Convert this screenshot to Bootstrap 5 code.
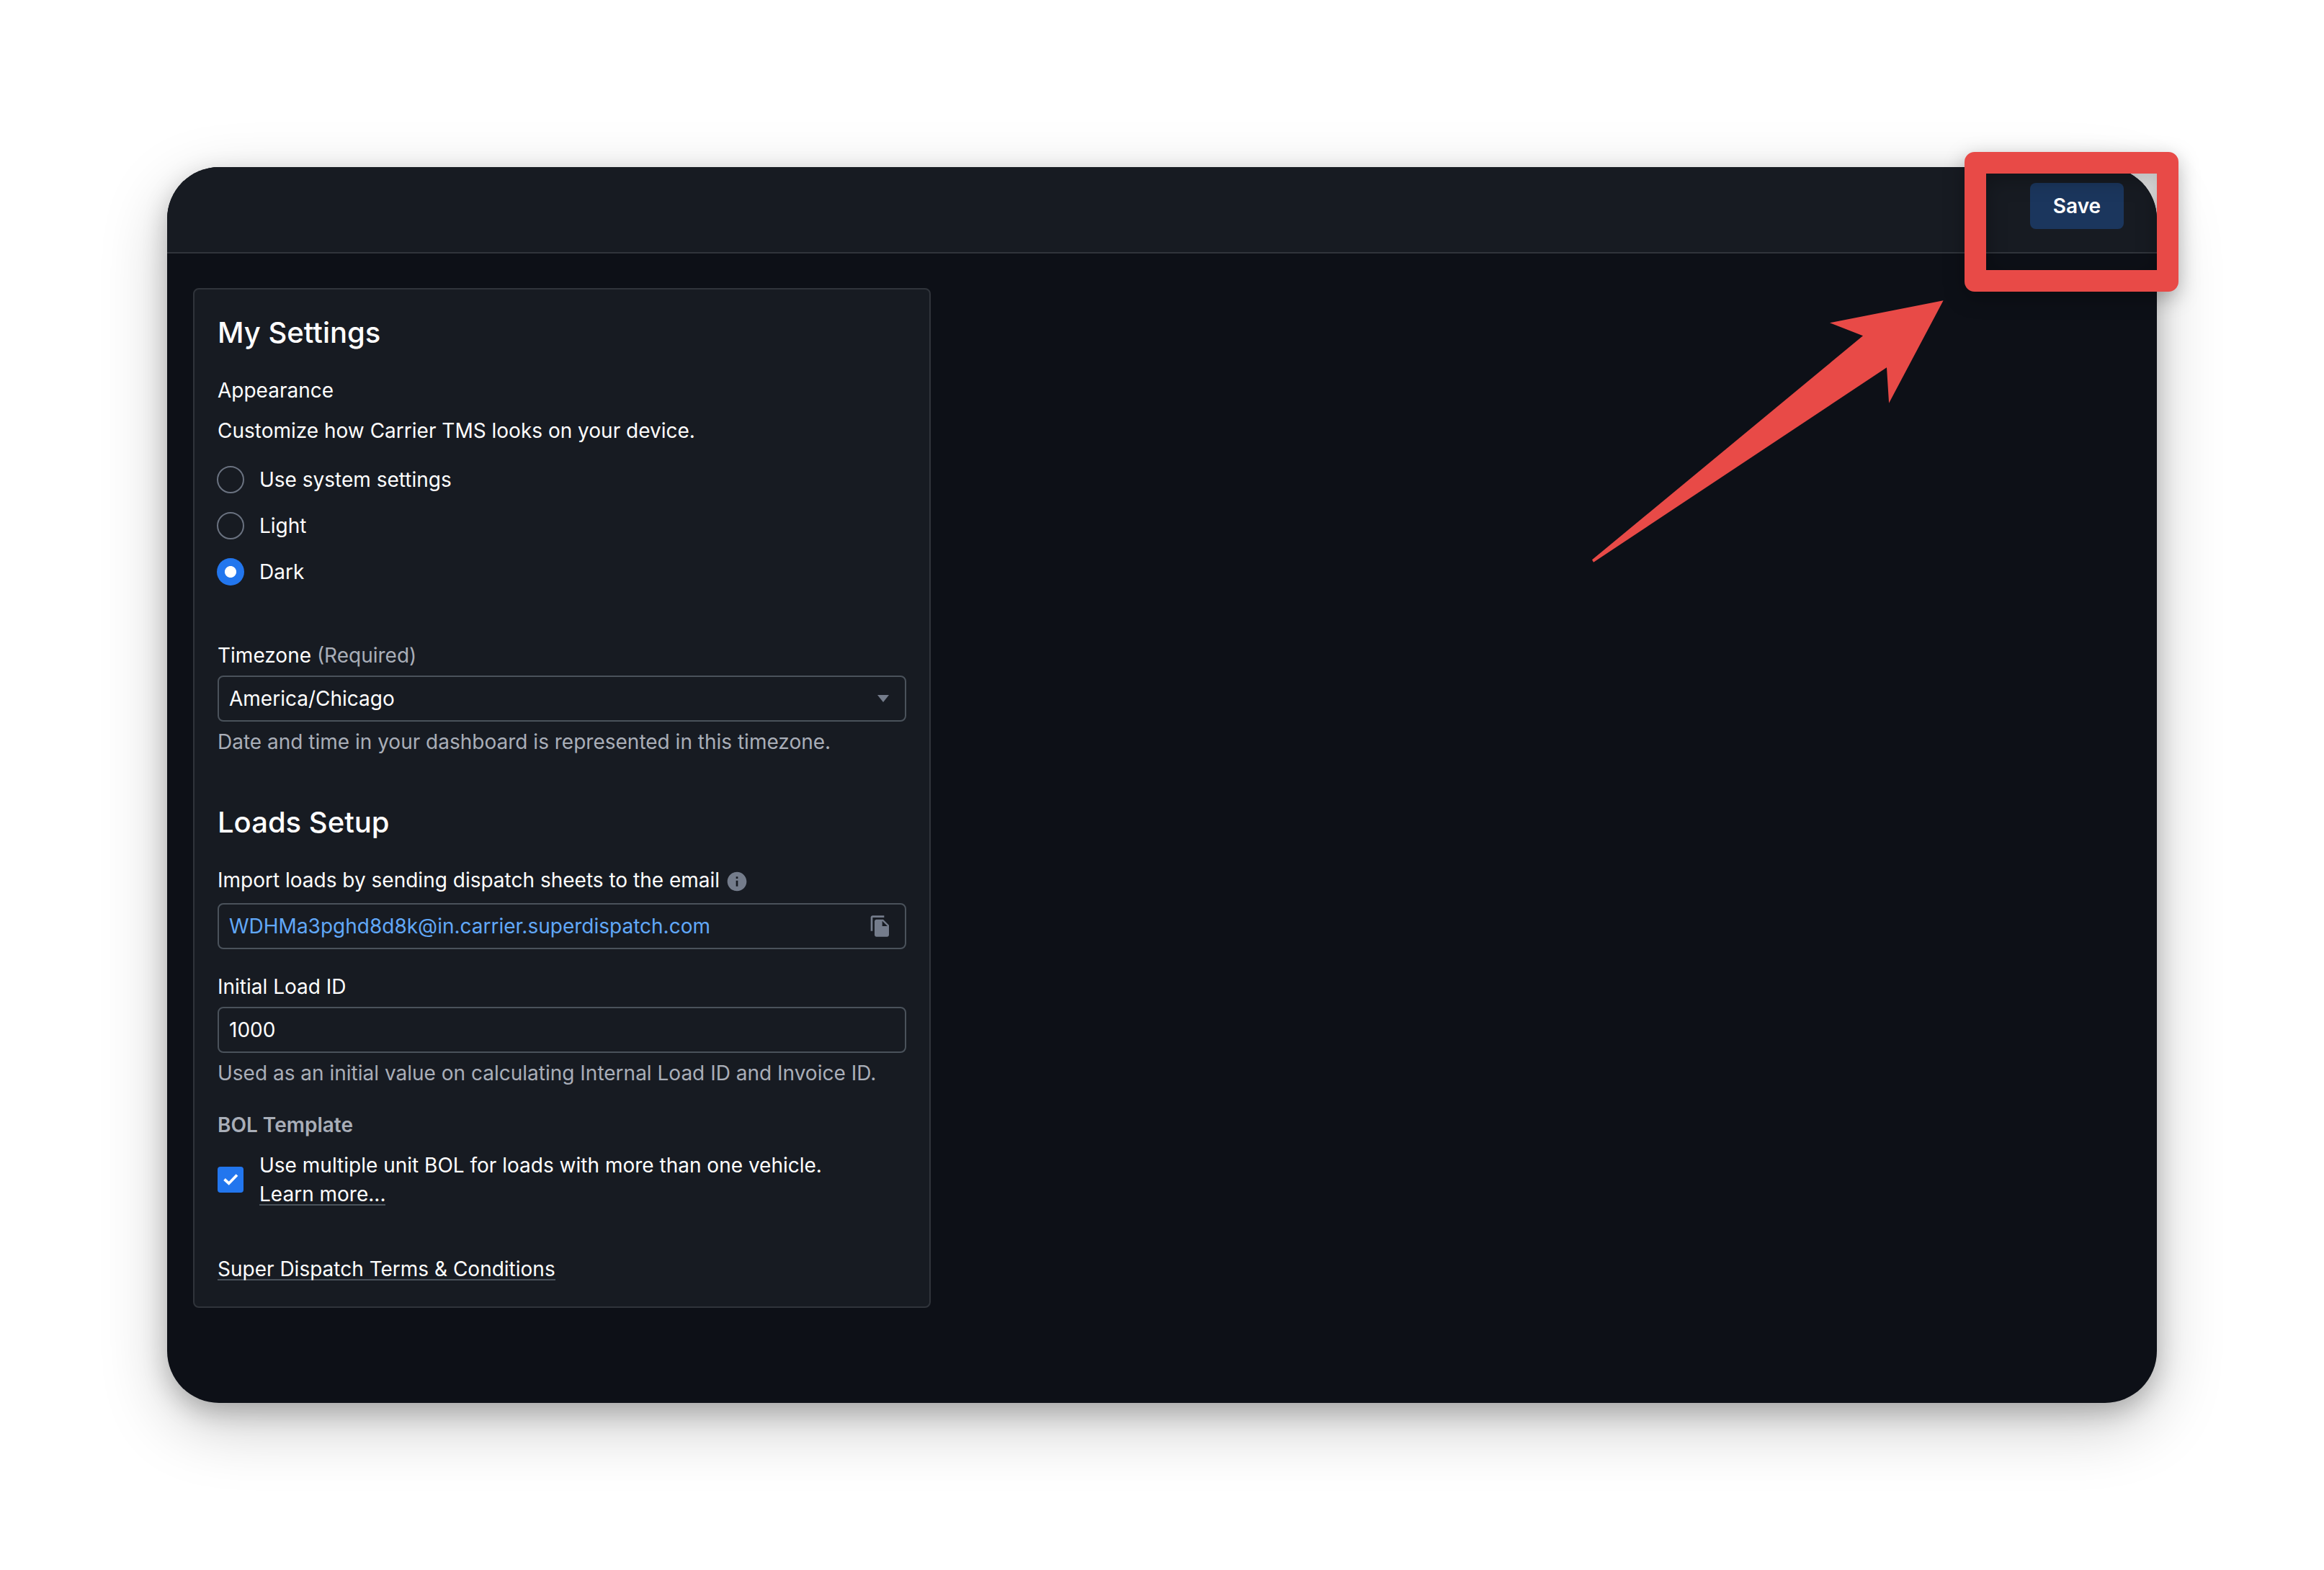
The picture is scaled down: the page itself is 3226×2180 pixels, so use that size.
<!DOCTYPE html>
<html lang="en">
<head>
  <meta charset="UTF-8" />
  <meta name="viewport" content="width=device-width, initial-scale=1.0"/>
  <title>My Settings</title>
  <link href="https://cdn.jsdelivr.net/npm/bootstrap@5.3.2/dist/css/bootstrap.min.css" rel="stylesheet"/>
  <style>
    body {
      background: #fff;
      color: #fff;
      font-family: Inter, sans-serif;
      font-size: 28px;
      line-height: 40px;
      padding: 232px;
    }
    .app-window {
      height: 1716px;
      background: #0d1017;
      border-radius: 72px;
      box-shadow: 0 30px 92px rgba(0,0,0,.22), 0 12px 34px rgba(0,0,0,.22);
    }
    .top-bar {
      height: 120px;
      padding: 22px 46px;
      background: #171b22;
      border-bottom: 2px solid #30343b;
      border-radius: 72px 72px 0 0;
    }
    .btn-save {
      width: 130px;
      height: 64px;
      padding: 0;
      background: #1b365d;
      border: 0;
      border-radius: 8px;
      color: #fff;
      font-size: 28px;
      font-weight: 600;
      line-height: 40px;
    }
    .settings-card {
      width: 1024px;
      margin: 48px 0 0 36px;
      background: #171b22;
      border: 2px solid #30343b;
      border-radius: 8px;
      color: #fff;
    }
    .settings-card .card-body { padding: 32px; }
    .section-title {
      margin: 0 0 32px;
      font-size: 40px;
      font-weight: 500;
      line-height: 56px;
    }
    .gap-section { margin-top: 64px; }
    .gap-field { margin-top: 32px; }
    .gap-text { margin-top: 16px; }
    .muted { color: #a9aeb8; }
    .choice { height: 64px; gap: 21px; }
    .choice .form-check-input {
      flex: none;
      width: 38px;
      height: 38px;
      margin: 0 0 0 -1px;
      background: transparent;
      border: 2px solid #6a7280;
    }
    .choice .form-check-input:checked {
      background: radial-gradient(circle, #fff 7.6px, #2276ee 8.4px);
      border: 0;
    }
    .field-box {
      height: 64px;
      margin-top: 8px;
      padding: 0 18px 0 14px;
      border: 2px solid #4a525b;
      border-radius: 8px;
    }
    .timezone-box { padding-right: 22px; }
    .email-box { margin-top: 12px; color: #61a8f8; }
    .bol-row { gap: 22px; }
    .plain-link {
      display: inline-block;
      height: 36px;
      border-bottom: 2px solid #4a525b;
      color: #fff;
      text-decoration: none;
      vertical-align: top;
    }
    .callout-box, .callout-arrow { position: absolute; pointer-events: none; }
    .callout-box {
      left: 2727px;
      top: 211px;
      width: 297px;
      height: 194px;
      border: 30px solid #e84a47;
      border-radius: 14px;
      filter: drop-shadow(0 8px 14px rgba(0,0,0,.28));
    }
    .callout-arrow { left: 2200px; top: 410px; }
  </style>
</head>
<body>
  <main class="app-window">
    <header class="top-bar d-flex justify-content-end">
      <button type="button" class="btn btn-save">Save</button>
    </header>

    <div class="card settings-card">
      <div class="card-body">
        <h2 class="section-title">My Settings</h2>
        <div>Appearance</div>
        <div class="gap-text">Customize how Carrier TMS looks on your device.</div>
        <div class="gap-text">
          <label class="choice d-flex align-items-center"><input class="form-check-input" type="radio" name="theme"/>Use system settings</label>
          <label class="choice d-flex align-items-center"><input class="form-check-input" type="radio" name="theme"/>Light</label>
          <label class="choice d-flex align-items-center"><input class="form-check-input" type="radio" name="theme" checked/>Dark</label>
        </div>

        <div class="gap-section">Timezone <span class="muted">(Required)</span></div>
        <div class="field-box timezone-box d-flex align-items-center justify-content-between">
          <span>America/Chicago</span>
          <svg width="16" height="10" viewBox="0 0 16 10"><path d="M0 0h16L8 10z" fill="#747c8b"/></svg>
        </div>
        <div class="muted mt-2">Date and time in your dashboard is represented in this timezone.</div>

        <h2 class="section-title gap-section">Loads Setup</h2>
        <div class="d-flex align-items-end gap-2">
          <span>Import loads by sending dispatch sheets to the email</span>
          <svg width="32" height="34" viewBox="0 0 24 25.5"><path fill="#747c8b" d="M12 2C6.480 2 2 6.480 2 12s4.480 10 10 10 10-4.480 10-10S17.520 2 12 2zm1 15h-2v-6h2v6zm0-8h-2V7h2v2z"/></svg>
        </div>
        <div class="field-box email-box d-flex align-items-center justify-content-between">
          <span>WDHMa3pghd8d8k@in.carrier.superdispatch.com</span>
          <svg width="32" height="32" viewBox="0 0 24 24"><path fill="#747c8b" d="M16 1H4c-1.100 0-2 .9-2 2v14h2V3h12V1zm-1 4l6 6v10c0 1.100-.9 2-2 2H7.990C6.890 23 6 22.100 6 21V7c0-1.100.9-2 1.990-2h7zm-1 7h5.500L14 6.500V12z"/></svg>
        </div>

        <div class="gap-field">Initial Load ID</div>
        <div class="field-box d-flex align-items-center">1000</div>
        <div class="muted mt-2">Used as an initial value on calculating Internal Load ID and Invoice ID.</div>

        <div class="gap-field muted fw-semibold">BOL Template</div>
        <div class="gap-text bol-row d-flex align-items-center">
          <svg width="36" height="36" viewBox="0 0 36 36"><rect width="36" height="36" rx="4" fill="#2276ee"/><path d="M9.500 17.500l6.200 5.700L27 11.500" fill="none" stroke="#fff" stroke-width="3.800"/></svg>
          <div>
            <div>Use multiple unit BOL for loads with more than one vehicle.</div>
            <a class="plain-link" href="#">Learn more...</a>
          </div>
        </div>
        <div class="gap-section"><a class="plain-link" href="#">Super Dispatch Terms &amp; Conditions</a></div>
      </div>
    </div>
  </main>

  <!-- Callout around the Save button -->
  <div class="callout-box"></div>
  <svg class="callout-arrow" width="510" height="380" viewBox="2200 410 510 380">
    <path fill="#e84a47" d="M2697.600 417.300L2539.900 448.300 2586 466.300 2210 777.300 2212 780.700 2619 510.300 2622.100 559.700z"/>
  </svg>

  <script src="https://cdn.jsdelivr.net/npm/bootstrap@5.3.2/dist/js/bootstrap.bundle.min.js"></script>
</body>
</html>
